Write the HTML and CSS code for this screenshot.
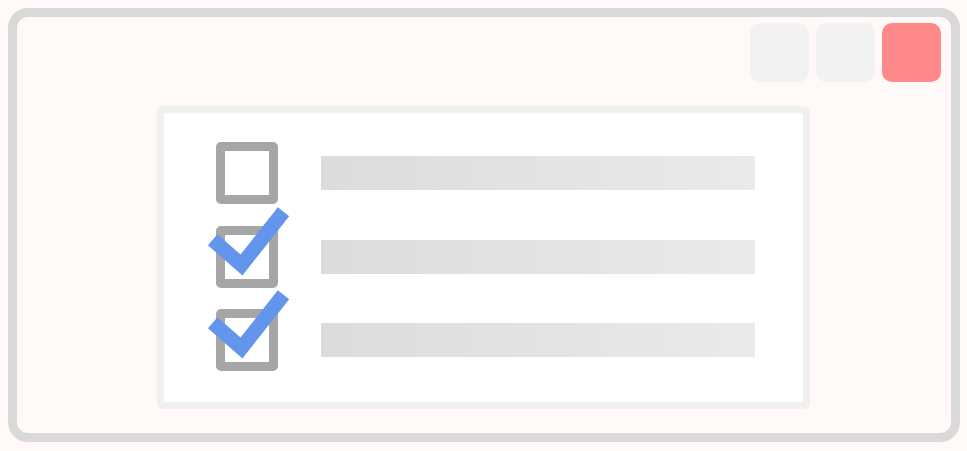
FILE: index.html
```html
<!DOCTYPE html>
<html>
<head>
<meta charset="utf-8">
<link rel="stylesheet" href="styles.css">
</head>
<body>
<div class="window">
  <div class="controls">
    <div class="ctl"></div>
    <div class="ctl"></div>
    <div class="ctl ctl-close"></div>
  </div>
  <div class="card">
    <div class="row">
      <div class="box"></div>
      <div class="bar"></div>
    </div>
    <div class="row">
      <div class="box">
        <svg class="check" width="95" height="80" viewBox="0 0 95 80"><path d="M8.7 37.8 L37.5 63 L79.5 9.8" fill="none" stroke="#6495ed" stroke-width="14.5" stroke-linejoin="miter" stroke-linecap="butt"/></svg>
      </div>
      <div class="bar"></div>
    </div>
    <div class="row">
      <div class="box">
        <svg class="check" width="95" height="80" viewBox="0 0 95 80"><path d="M8.7 37.8 L37.5 63 L79.5 9.8" fill="none" stroke="#6495ed" stroke-width="14.5" stroke-linejoin="miter" stroke-linecap="butt"/></svg>
      </div>
      <div class="bar"></div>
    </div>
  </div>
</div>
</body>
</html>
```
FILE: styles.css
```css
html, body {
  margin: 0;
  padding: 0;
  background: #fffaf7;
}
body {
  padding: 8px 7px 9px 8px;
}
.window {
  box-sizing: border-box;
  width: 952px;
  height: 434px;
  border: 9px solid #d9d9d9;
  border-radius: 20px;
  background: #fffaf7;
  display: flex;
  flex-direction: column;
  padding: 6px 10px 0 0;
}
.controls {
  display: flex;
  justify-content: flex-end;
  gap: 7px;
}
.ctl {
  width: 59px;
  height: 59px;
  border-radius: 10px;
  background: #f2f2f2;
}
.ctl-close {
  background: #ff8888;
}
.card {
  box-sizing: border-box;
  align-self: flex-start;
  margin: 24px 0 0 140px;
  width: 653px;
  height: 303px;
  border: 7px solid #f0f0f0;
  border-radius: 6px;
  background: #ffffff;
  padding: 29px 0 0 52px;
  display: flex;
  flex-direction: column;
  gap: 21.5px;
}
.row {
  display: flex;
  align-items: center;
  gap: 43px;
}
.box {
  position: relative;
  box-sizing: border-box;
  width: 62px;
  height: 62px;
  border: 9px solid #a6a6a6;
  border-radius: 5px;
  flex: none;
}
.check {
  position: absolute;
  left: -21px;
  top: -33px;
}
.bar {
  width: 434px;
  height: 34px;
  background: linear-gradient(to right, #dcdcdc, #eaeaea);
}
```
